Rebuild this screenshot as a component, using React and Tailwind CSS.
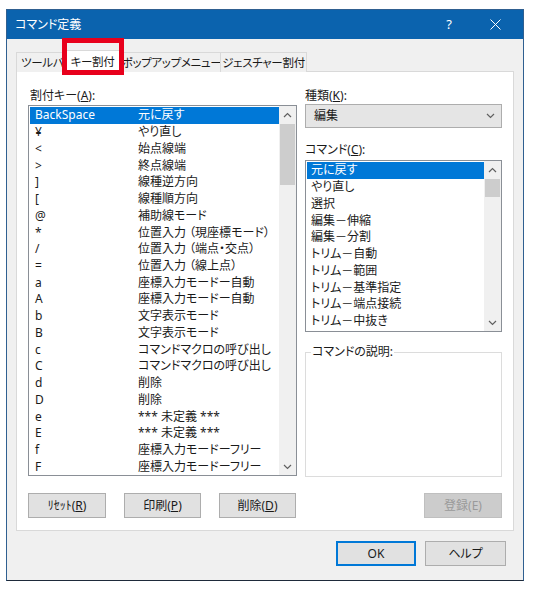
import React from 'react'

const keyRows = [
  ['BackSpace', '元に戻す'],
  ['¥', 'やり直し'],
  ['<', '始点線端'],
  ['>', '終点線端'],
  [']', '線種逆方向'],
  ['[', '線種順方向'],
  ['@', '補助線モード'],
  ['*', '位置入力 （現座標モード）'],
  ['/', '位置入力 （端点・交点）'],
  ['=', '位置入力 （線上点）'],
  ['a', '座標入力モードー自動'],
  ['A', '座標入力モードー自動'],
  ['b', '文字表示モード'],
  ['B', '文字表示モード'],
  ['c', 'コマンドマクロの呼び出し'],
  ['C', 'コマンドマクロの呼び出し'],
  ['d', '削除'],
  ['D', '削除'],
  ['e', '*** 未定義 ***'],
  ['E', '*** 未定義 ***'],
  ['f', '座標入力モードーフリー'],
  ['F', '座標入力モードーフリー'],
]

const commands = [
  '元に戻す',
  'やり直し',
  '選択',
  '編集－伸縮',
  '編集－分割',
  'トリム－自動',
  'トリム－範囲',
  'トリム－基準指定',
  'トリム－端点接続',
  'トリム－中抜き',
]

function Chevron({ up = false }) {
  return (
    <svg width="9" height="6" viewBox="0 0 9 6" className="block">
      <polyline
        points={up ? '1,5 4.5,1.5 8,5' : '1,1 4.5,4.5 8,1'}
        fill="none"
        stroke="#606060"
        strokeWidth="1.2"
      />
    </svg>
  )
}

function ScrollBar({ thumbTop, thumbHeight }) {
  return (
    <div className="w-[17px] h-full bg-[#f0f0f0] flex flex-col">
      <div className="h-[17px] flex items-center justify-center"><Chevron up /></div>
      <div className="flex-1 relative">
        <div className="absolute left-[1px] right-[1px] bg-[#cdcdcd]" style={{ top: thumbTop, height: thumbHeight }} />
      </div>
      <div className="h-[17px] flex items-center justify-center"><Chevron /></div>
    </div>
  )
}

function Btn({ children, className = '', disabled = false }) {
  return (
    <div
      className={
        'h-[25px] flex items-center justify-center border text-[12px] ' +
        (disabled ? 'bg-[#cccccc] border-[#bfbfbf] text-[#9a9a9a] ' : 'bg-[#e1e1e1] border-[#adadad] text-[#1a1a1a] ') +
        className
      }
    >
      {children}
    </div>
  )
}

export default function App() {
  return (
    <div className="w-[533px] h-[591px] bg-white relative text-[#1a1a1a] font-['Noto_Sans','Noto_Sans_CJK_JP',sans-serif] [font-feature-settings:'palt'] text-[12px]">
      <div className="pt-[9px] pl-[6px]">
        <div className="w-[518px] h-[572px] border border-[#2f5f90] border-b-[#1e2a3a] bg-[#f0f0f0] flex flex-col">
          {/* title bar */}
          <div className="h-[29px] bg-[#0b63ae] text-white flex items-center pl-[8px] shrink-0">
            <span className="text-[12px]">コマンド定義</span>
            <span className="ml-auto text-[13px] mr-[38px]">?</span>
            <svg width="11" height="11" viewBox="0 0 11 11" className="mr-[22px]">
              <path d="M0.5 0.5 L10.5 10.5 M10.5 0.5 L0.5 10.5" stroke="white" strokeWidth="1" />
            </svg>
          </div>

          <div className="px-[9px] pt-[11px] flex flex-col flex-1">
            {/* tabs */}
            <div className="flex items-end h-[22px] relative z-10 -mb-px text-[11.5px] tracking-[-0.3px]">
              <div className="h-[20px] w-[47px] pl-[4px] border border-b-0 border-[#d9d9d9] bg-[#f0f0f0] flex items-center whitespace-nowrap overflow-hidden">ツールバー</div>
              <div className="h-[22px] w-[61px] -ml-px border border-b-0 border-[#d9d9d9] bg-white flex items-center justify-center whitespace-nowrap">キー割付</div>
              <div className="h-[20px] w-[99px] -ml-px border border-b-0 border-[#d9d9d9] bg-[#f0f0f0] flex items-center justify-center whitespace-nowrap">ポップアップメニュー</div>
              <div className="h-[20px] w-[87px] -ml-px border border-b-0 border-[#d9d9d9] bg-[#f0f0f0] flex items-center justify-center whitespace-nowrap">ジェスチャー割付</div>
            </div>

            {/* tab page */}
            <div className="h-[460px] bg-white border border-[#d9d9d9] px-[11px] pt-[16px] flex flex-col">
              <div className="grid grid-cols-[269px_197px] gap-x-[8px]">
                {/* left column */}
                <div className="flex flex-col">
                  <div className="h-[17px] pl-[2px] leading-[16px]">割付キー(<span className="underline">A</span>):</div>
                  <div className="h-[371px] border border-[#8a8f96] flex bg-white">
                    <div className="flex-1 flex flex-col pt-[1px] pl-[1px]">
                      {keyRows.map(([k, c], i) => (
                        <div
                          key={i}
                          className={'h-[16.8px] flex items-center leading-none ' + (i === 0 ? 'bg-[#0078d7] text-white' : '')}
                        >
                          <span className="w-[108px] pl-[5px] shrink-0">{k}</span>
                          <span className="whitespace-nowrap">{c}</span>
                        </div>
                      ))}
                    </div>
                    <ScrollBar thumbTop={1} thumbHeight={61} />
                  </div>
                </div>

                {/* right column */}
                <div className="flex flex-col">
                  <div className="h-[17px] leading-[16px]">種類(<span className="underline">K</span>):</div>
                  <div className="h-[24px] mt-[-1px] border border-[#adadad] bg-[#e5e5e5] flex items-center pl-[8px] pr-[6px]">
                    <span>編集</span>
                    <span className="ml-auto"><Chevron /></span>
                  </div>
                  <div className="h-[17px] mt-[14px] leading-[16px]">コマンド(<span className="underline">C</span>):</div>
                  <div className="h-[172px] border border-[#8a8f96] flex bg-white mt-[1px]">
                    <div className="flex-1 flex flex-col pt-[1px] pl-[1px]">
                      {commands.map((c, i) => (
                        <div
                          key={i}
                          className={'h-[16.75px] flex items-center pl-[4px] leading-none whitespace-nowrap ' + (i === 0 ? 'bg-[#0078d7] text-white' : '')}
                        >
                          {c}
                        </div>
                      ))}
                    </div>
                    <ScrollBar thumbTop={1} thumbHeight={18} />
                  </div>
                  <div className="mt-[20px] h-[125px] border border-[#dcdcdc] relative">
                    <span className="absolute left-[5px] top-[-9px] bg-white px-[1px] leading-[16px]">コマンドの説明:</span>
                  </div>
                </div>
              </div>

              {/* tab page buttons */}
              <div className="flex mt-[16px]">
                <Btn className="w-[78px]">ﾘｾｯﾄ(<span className="underline">R</span>)</Btn>
                <Btn className="w-[77px] ml-[18px]">印刷(<span className="underline">P</span>)</Btn>
                <Btn className="w-[77px] ml-[18px]">削除(<span className="underline">D</span>)</Btn>
                <Btn className="w-[78px] ml-auto" disabled>登録(E)</Btn>
              </div>
            </div>

            {/* dialog buttons */}
            <div className="flex justify-end gap-[9px] mt-[10px] pr-[8px]">
              <Btn className="w-[80px] !border-[#0078d7] border-2">OK</Btn>
              <Btn className="w-[81px]">ヘルプ</Btn>
            </div>
          </div>
        </div>
      </div>

      {/* red highlight annotation */}
      <div className="absolute z-20 left-[62px] top-[38px] w-[62px] h-[37px] border-solid border-[length:5px] border-[#e8001c]" />
    </div>
  )
}
